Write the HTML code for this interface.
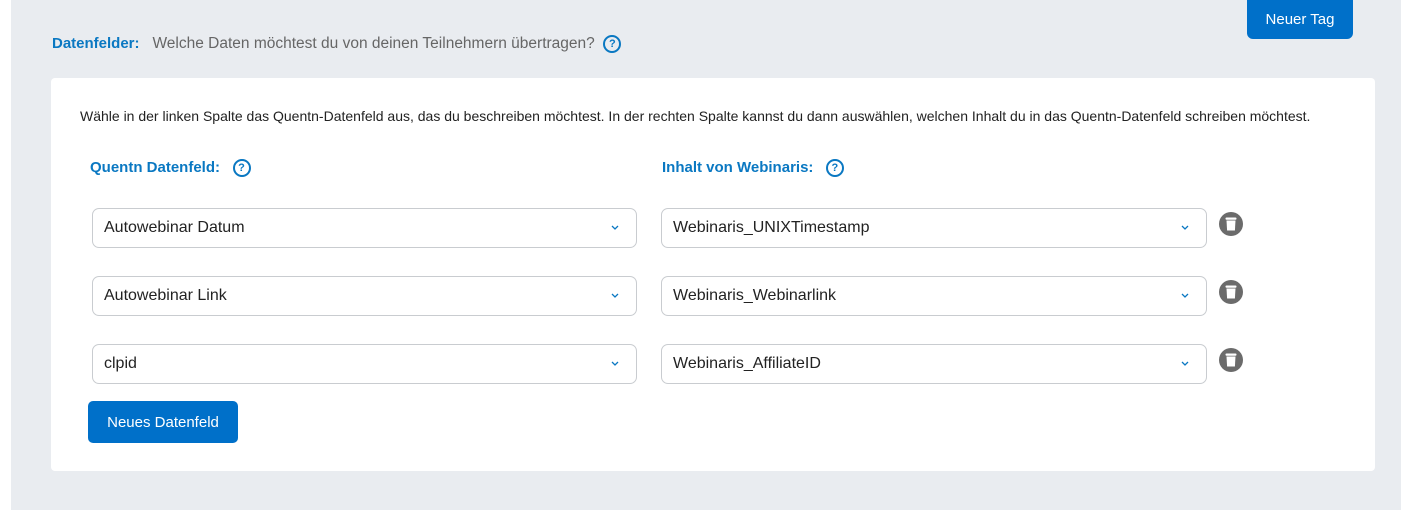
<!DOCTYPE html>
<html><head><meta charset="utf-8"><style>
body{margin:0;width:1403px;height:510px;background:#fff;font-family:"Liberation Sans",sans-serif;position:relative;overflow:hidden}
.bg{position:absolute;left:11px;top:0;width:1390px;height:510px;background:#e9ecf0}
.abs{position:absolute}
.btn{background:#0070c9;color:#fff;border-radius:5px;font-size:15px;display:flex;align-items:center;justify-content:center}
.card{left:51px;top:78px;width:1324px;height:393px;background:#fff;border-radius:4px}
.lbl{color:#0a78c2;font-weight:bold;font-size:15px}
.q{display:inline-block;width:14px;height:14px;border:2px solid #0a78c2;border-radius:50%;color:#0a78c2;font-size:11px;font-weight:bold;text-align:center;line-height:14px;vertical-align:middle}
.sel{height:38px;border:1px solid #c9ccd0;border-radius:7px;font-size:16px;color:#222;box-sizing:border-box;padding-left:11px;display:flex;align-items:center}
.sel svg{position:absolute;right:17px;top:16px}
</style></head><body>
<div class="bg"></div>
<div class="abs btn" style="left:1247px;top:0;width:106px;height:39px;border-radius:0 0 6px 6px">Neuer Tag</div>
<div class="abs" style="left:52px;top:35px;font-size:15.5px;color:#666"><span class="lbl" style="font-weight:bold">Datenfelder:</span>&nbsp;&nbsp; Welche Daten möchtest du von deinen Teilnehmern übertragen? &nbsp;<span class="q">?</span></div>
<div class="abs card"></div>
<div class="abs" style="left:80px;top:108px;font-size:14px;color:#222;white-space:nowrap">Wähle in der linken Spalte das Quentn-Datenfeld aus, das du beschreiben möchtest. In der rechten Spalte kannst du dann auswählen, welchen Inhalt du in das Quentn-Datenfeld schreiben möchtest.</div>
<div class="abs lbl" style="left:90px;top:159px">Quentn Datenfeld: &nbsp;&nbsp;<span class="q">?</span></div>
<div class="abs lbl" style="left:662px;top:159px">Inhalt von Webinaris: &nbsp;&nbsp;<span class="q">?</span></div>

<div class="abs sel" style="left:92px;top:208px;width:545px;height:40px">Autowebinar Datum<svg width="8" height="6"><path d="M1 1l3 3 3-3" stroke="#0a78c2" fill="none" stroke-width="1.3"/></svg></div>
<div class="abs sel" style="left:661px;top:208px;width:546px;height:40px">Webinaris_UNIXTimestamp<svg width="8" height="6"><path d="M1 1l3 3 3-3" stroke="#0a78c2" fill="none" stroke-width="1.3"/></svg></div>
<div class="abs sel" style="left:92px;top:276px;width:545px;height:40px">Autowebinar Link<svg width="8" height="6"><path d="M1 1l3 3 3-3" stroke="#0a78c2" fill="none" stroke-width="1.3"/></svg></div>
<div class="abs sel" style="left:661px;top:276px;width:546px;height:40px">Webinaris_Webinarlink<svg width="8" height="6"><path d="M1 1l3 3 3-3" stroke="#0a78c2" fill="none" stroke-width="1.3"/></svg></div>
<div class="abs sel" style="left:92px;top:344px;width:545px;height:40px">clpid<svg width="8" height="6"><path d="M1 1l3 3 3-3" stroke="#0a78c2" fill="none" stroke-width="1.3"/></svg></div>
<div class="abs sel" style="left:661px;top:344px;width:546px;height:40px">Webinaris_AffiliateID<svg width="8" height="6"><path d="M1 1l3 3 3-3" stroke="#0a78c2" fill="none" stroke-width="1.3"/></svg></div>

<svg class="abs" style="left:1219px;top:212px" width="24" height="24"><circle cx="12" cy="12" r="12" fill="#6b6b6b"/><rect x="6.5" y="5.5" width="11" height="2.2" rx="1" fill="#fff"/><path d="M7.5 8.5h9l-0.6 10h-7.8z" fill="#fff"/></svg>
<svg class="abs" style="left:1219px;top:280px" width="24" height="24"><circle cx="12" cy="12" r="12" fill="#6b6b6b"/><rect x="6.5" y="5.5" width="11" height="2.2" rx="1" fill="#fff"/><path d="M7.5 8.5h9l-0.6 10h-7.8z" fill="#fff"/></svg>
<svg class="abs" style="left:1219px;top:348px" width="24" height="24"><circle cx="12" cy="12" r="12" fill="#6b6b6b"/><rect x="6.5" y="5.5" width="11" height="2.2" rx="1" fill="#fff"/><path d="M7.5 8.5h9l-0.6 10h-7.8z" fill="#fff"/></svg>

<div class="abs btn" style="left:88px;top:401px;width:150px;height:42px">Neues Datenfeld</div>
</body></html>
